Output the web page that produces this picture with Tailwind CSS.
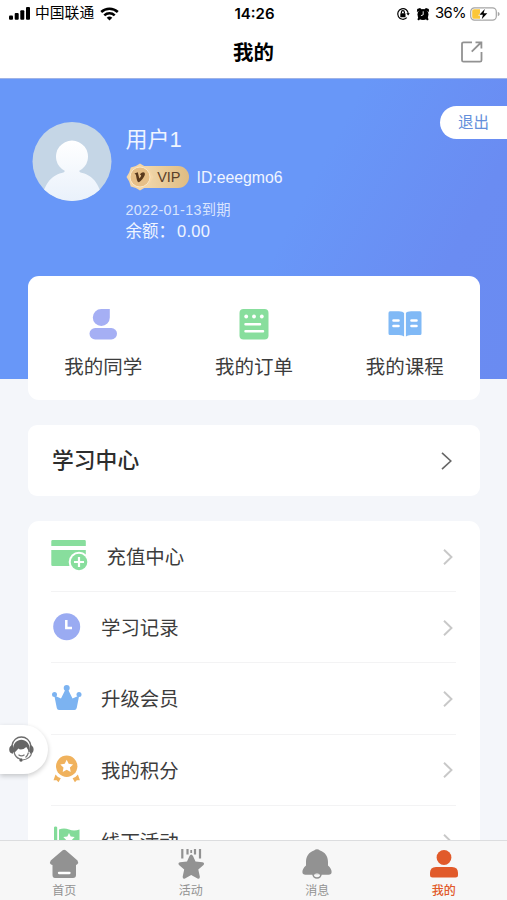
<!DOCTYPE html>
<html lang="zh-CN">
<head>
<meta charset="utf-8">
<meta name="viewport" content="width=device-width, initial-scale=1">
<title>我的</title>
<script src="https://cdn.jsdelivr.net/npm/@tailwindcss/browser@4"></script>
</head>
<body class="bg-[#f4f6fa] font-['Liberation_Sans','Noto_Sans_CJK_SC',sans-serif]">
<div class="relative flex h-[900px] w-[507px] flex-col overflow-hidden bg-[#f4f6fa]">

  <!-- Status bar and title -->
  <header class="h-[79px] shrink-0 border-b border-[#9fb3e6] bg-white text-black">
    <div class="grid h-[27px] grid-cols-[1fr_auto_1fr] items-center pl-[9px] pr-[7px] font-['Inter','Noto_Sans_CJK_SC',sans-serif] text-[14.800px] leading-[27px]">
      <div class="flex items-center">
        <svg class="h-[13px] w-[21px]" viewBox="0 0 21 13"><rect y="8.5" width="4" height="4.3" rx="1"/><rect x="5.7" y="6" width="4" height="6.8" rx="1"/><rect x="11.3" y="3.2" width="4" height="9.6" rx="1"/><rect x="17" y="0" width="4" height="12.8" rx="1"/></svg>
        <span class="ml-[5px]">中国联通</span>
        <svg class="ml-[6px] h-[14px] w-[19px]" viewBox="0 0 19 14" fill="none" stroke="#000" stroke-width="2.5"><path d="M1.2 5a12 12 0 0 1 16.6 0"/><path d="M4.3 8.4a7.5 7.5 0 0 1 10.4 0"/><path d="M9.5 13.6 6.7 10.8a4 4 0 0 1 5.6 0z" fill="#000" stroke="none"/></svg>
      </div>
      <span class="text-[15px] font-semibold">14:26</span>
      <div class="flex items-center justify-end">
        <svg class="h-[14px] w-[14px]" viewBox="0 0 14 14" fill="none" stroke="#000" stroke-width="1.2"><path d="M10.8 10.7A5.3 5.3 0 1 1 12.3 7"/><path d="M10.3 6.2h3.5L12.2 8.6z" fill="#000" stroke="none"/><rect x="4.3" y="6.2" width="5.2" height="4" rx=".5" fill="#000" stroke="none"/><path d="M5.4 6.5V5.2a1.5 1.5 0 0 1 3 0v1.3"/></svg>
        <svg class="ml-[6px] h-[14px] w-[14px]" viewBox="0 0 14 14"><circle cx="7" cy="7.500" r="5.500"/><path d="M.9 4.900 1.200 2 4 .9l2 1.600zM13.100 4.900 12.800 2 10 .9 8 2.500zM2.600 9.500l2 2-1.700 2-1.500-1zM11.400 9.500l-2 2 1.700 2 1.500-1z"/><path d="M7.200 4.300v3.500l-2.300.9" fill="none" stroke="#fff" stroke-width=".9"/></svg>
        <span class="ml-[5px] tracking-[-0.600px]">36%</span>
        <svg class="ml-[4px] h-[14px] w-[30px]" viewBox="0 0 30 14"><rect x=".7" y=".9" width="25.600" height="12.200" rx="3.800" fill="#fff" stroke="#a5a5a5" stroke-width="1.200"/><path d="M27.800 5v4.200c1.300-.4 1.800-1.200 1.800-2.100S29.100 5.400 27.800 5z" fill="#a5a5a5"/><path d="M4.500 2.300H10V11.800H4.500A2 2 0 0 1 2.200 9.600V4.500A2 2 0 0 1 4.500 2.300z" fill="#fbc638"/><path d="M14.800 2 9.400 7.800h3.500L11.700 12.300 17.300 6.300h-3.700z" stroke="#fff" stroke-width="1.200" paint-order="stroke"/></svg>
      </div>
    </div>
    <div class="grid h-[51px] grid-cols-[1fr_auto_1fr] items-center pl-6 pr-[24px]">
      <span></span>
      <h1 class="text-[20.500px] leading-[30px] font-bold">我的</h1>
      <svg class="-mt-[2px] h-[22px] w-[22px] justify-self-end" viewBox="0 0 22 22" fill="none" stroke="#929292" stroke-width="1.800"><path d="M11 1.300H2.500A1.500 1.500 0 0 0 1 2.800V19.200A1.500 1.500 0 0 0 2.500 20.700H19A1.500 1.500 0 0 0 20.500 19.200V11"/><path d="M10.700 10.700 19.500 2M14.500 1.400H20.400V7.400"/></svg>
    </div>
  </header>

  <main class="min-h-0 flex-1 overflow-hidden">
    <!-- Profile -->
    <section class="flex h-[300px] items-start justify-between bg-[linear-gradient(118deg,#6897f8_0%,#6897f8_55%,#6a8cf2_82%,#6a8bf1_100%)] pt-[27px] pl-8">
      <div class="flex pt-4">
        <svg class="h-20 w-20" viewBox="0 0 80 80"><defs><clipPath id="av"><circle cx="40" cy="39.500" r="39.500"/></clipPath><linearGradient id="bust" x1="0" y1="0" x2="0" y2="1"><stop offset="0" stop-color="#fff"/><stop offset="1" stop-color="#e9f1fb"/></linearGradient></defs><g clip-path="url(#av)"><rect width="80" height="80" fill="#c5d6e6"/><path d="M10 80C11 61 21 52.500 31.500 50.500L33 49A16 16 0 1 1 47 49l1.500 1.500C59 52.500 69 61 70 80z" fill="url(#bust)"/></g></svg>
        <div class="pt-[3px] pl-[13.500px] text-white/90">
          <div class="text-[22px] leading-[30px]">用户1</div>
          <div class="mt-[8px] flex h-7 items-center">
            <div class="flex h-7 items-center">
              <svg class="z-10 h-7 w-7" viewBox="0 0 28 28"><path d="M14 .5 18.200 3 23.200 4.500 24.800 9.500 27.500 14 24.800 18.500 23.200 23.500 18.200 25 14 27.500 9.800 25 4.800 23.500 3.200 18.500.5 14 3.200 9.500 4.800 4.500 9.800 3z" fill="#f4d6a7"/><circle cx="14" cy="14" r="10" fill="#e7bf87" stroke="#fbe8c8" stroke-width="1"/><path d="M8.500 10.500 11.800 9.200 13.300 15.600C15.600 13 15.800 11.600 13.900 11.700 14.800 8.800 19.300 8 18.900 11.300 18.500 14.200 15 18.500 12.800 19.200 11.200 19 10.800 16.500 9.900 11.700z" fill="#59391d"/></svg>
              <span class="-ml-4 flex h-[22px] w-[51px] items-center justify-end rounded-r-full bg-[linear-gradient(90deg,#f3dbb1,#dfbc83)] pr-[8px] text-[14.500px] leading-[22px] text-[#59402a]">VIP</span>
            </div>
            <span class="ml-[8px] pt-[2px] text-[15.800px] leading-5">ID:eeegmo6</span>
          </div>
          <div class="mt-[9px] text-[14.300px] leading-[20px] tracking-[0.300px] text-white/75">2022-01-13到期</div>
          <div class="text-[16.500px] leading-[22px]">余额：<span class="ml-[2px] tracking-[0.300px]">0.00</span></div>
        </div>
      </div>
      <button class="h-[33px] w-[67px] rounded-l-full bg-white text-[15.500px] text-[#648fdb]">退出</button>
    </section>

    <!-- Shortcuts -->
    <section class="mx-7 -mt-[103px] grid h-[124px] w-[452px] grid-cols-3 rounded-[11px] bg-white pt-[31px] text-[19.500px] leading-[28px] text-[#3c3c3c]">
      <div class="flex flex-col items-center gap-[12px]">
        <svg class="h-[34px] w-[34px]" viewBox="0 0 34 34" fill="#a5aff4"><path d="M15.300 2H23.800V10.500A8.500 8.500 0 1 1 15.300 2z"/><rect x="3.500" y="21" width="27.500" height="11.500" rx="5.700"/></svg>
        <span>我的同学</span>
      </div>
      <div class="flex flex-col items-center gap-[12px]">
        <svg class="h-[34px] w-[34px]" viewBox="0 0 34 34"><rect x="2.500" y="2" width="29" height="30.500" rx="4" fill="#88de9d"/><g fill="#fff"><circle cx="9.200" cy="9.500" r="1.900"/><circle cx="17" cy="9.500" r="1.900"/><circle cx="24.800" cy="9.500" r="1.900"/></g><path d="M8.500 17.200H23M8.500 24.300H26" stroke="#fff" stroke-width="2.500" stroke-linecap="round"/></svg>
        <span>我的订单</span>
      </div>
      <div class="flex flex-col items-center gap-[12px]">
        <svg class="h-[34px] w-[34px]" viewBox="0 0 34 34"><path d="M.5 6Q.5 4.500 2 4.300H11Q15 4.300 16.100 6V29.500Q14.500 28 11 28H2Q.5 28 .5 26.500zM33.500 6Q33.500 4.500 32 4.300H23Q19 4.300 17.900 6V29.500Q19.500 28 23 28H32Q33.500 28 33.500 26.500z" fill="#80b9f6"/><path d="M5.500 13.500h5M5.500 19h5M23.500 13.500h5M23.500 19h5" stroke="#fff" stroke-width="2.600" stroke-linecap="round"/></svg>
        <span>我的课程</span>
      </div>
    </section>

    <!-- Learning centre -->
    <section class="mx-7 mt-[25px] flex h-[71px] w-[452px] items-center justify-between rounded-[9px] bg-white pl-6 pr-7">
      <h2 class="text-[21.800px] leading-8 font-medium text-[#2d2d2d]">学习中心</h2>
      <svg class="h-[18px] w-[11px]" viewBox="0 0 11 18" fill="none" stroke="#666" stroke-width="1.600"><path d="M1 .8 9.800 9 1 17.200"/></svg>
    </section>

    <!-- Menu -->
    <ul class="mx-7 mt-[25px] w-[452px] rounded-[11px] bg-white pl-[23px] pr-6 text-[19.400px] leading-7 text-[#3c3c3c]">
      <li class="flex h-[71.200px] items-center border-b border-[#f3f3f4]">
        <svg class="h-[34px] w-[38px]" viewBox="0 0 38 34"><path d="M.3 2.300Q.3 1 1.600 1H33.500Q34.800 1 34.800 2.300V7H.3zM.3 11H34.800V27H1.600Q.3 27 .3 25.700z" fill="#88de9d"/><circle cx="28" cy="23" r="10.300" fill="#fff"/><circle cx="28" cy="23" r="8.300" fill="#88de9d"/><path d="M28 18v10M23 23h10" stroke="#fff" stroke-width="2.200"/></svg>
        <span class="ml-[17.500px] pt-[2px]">充值中心</span>
        <svg class="mt-px ml-auto mr-[3px] h-4 w-[10px]" viewBox="0 0 10 16" fill="none" stroke="#c8c8c8" stroke-width="1.900"><path d="M1 .8 8.500 8 1 15.200"/></svg>
      </li>
      <li class="flex h-[71.200px] items-center border-b border-[#f3f3f4]">
        <svg class="h-8 w-8" viewBox="0 0 32 32"><circle cx="15.700" cy="15.800" r="13.500" fill="#9aabf2"/><path d="M15.300 9V17H21" fill="none" stroke="#fff" stroke-width="2.500"/></svg>
        <span class="ml-[18px] pt-[2px]">学习记录</span>
        <svg class="mt-px ml-auto mr-[3px] h-4 w-[10px]" viewBox="0 0 10 16" fill="none" stroke="#c8c8c8" stroke-width="1.900"><path d="M1 .8 8.500 8 1 15.200"/></svg>
      </li>
      <li class="flex h-[71.200px] items-center border-b border-[#f3f3f4]">
        <svg class="mt-[2px] h-8 w-8" viewBox="0 0 32 32" fill="#7cb3f1"><circle cx="15.700" cy="5" r="3"/><circle cx="3.500" cy="11.500" r="2.500"/><circle cx="28" cy="11.500" r="2.500"/><path d="M3.300 12.500 10 15.500 14.200 7H17.300L21.500 15.500 28.200 12.500 25.700 25Q25.200 27 23.500 27H8Q6.200 27 5.800 25z"/></svg>
        <span class="ml-[18px] pt-[2px]">升级会员</span>
        <svg class="mt-[2px] ml-auto mr-[3px] h-4 w-[10px]" viewBox="0 0 10 16" fill="none" stroke="#c8c8c8" stroke-width="1.900"><path d="M1 .8 8.500 8 1 15.200"/></svg>
      </li>
      <li class="flex h-[71.200px] items-center border-b border-[#f3f3f4]">
        <svg class="h-8 w-8" viewBox="0 0 32 32"><circle cx="15.700" cy="12.300" r="10.700" fill="#f0b25d"/><path d="m15.700 5.800 2 4 4.400.6-3.200 3.100.8 4.400-4-2.100-4 2.100.8-4.400-3.200-3.100 4.400-.6z" fill="#fff"/><path d="M4.500 20.500Q6.500 23.300 9.800 24.300L7.500 28.300 5.600 26.200 2.500 26.300zM26.900 20.500Q24.900 23.300 21.600 24.300L23.900 28.300 25.800 26.200 28.900 26.300z" fill="#f0b25d"/></svg>
        <span class="ml-[18px] pt-[2px]">我的积分</span>
        <svg class="mt-px ml-auto mr-[3px] h-4 w-[10px]" viewBox="0 0 10 16" fill="none" stroke="#c8c8c8" stroke-width="1.900"><path d="M1 .8 8.500 8 1 15.200"/></svg>
      </li>
      <li class="flex h-[71.200px] items-center">
        <svg class="h-8 w-8" viewBox="0 0 32 32"><path d="M3 2.500Q3 1.500 4.600 1.500T6.200 2.500V31H3zM8 4.500Q13 2.300 18 4.500T28.500 4.500V23Q23 25.500 18 23T8 23z" fill="#83db99"/><path d="m18 8 1.700 3.600 4 .5-2.900 2.800.7 4-3.500-2-3.500 2 .7-4-2.900-2.800 4-.5z" fill="#fff"/></svg>
        <span class="ml-[18px] pt-[2px]">线下活动</span>
        <svg class="mt-px ml-auto mr-[3px] h-4 w-[10px]" viewBox="0 0 10 16" fill="none" stroke="#c8c8c8" stroke-width="1.900"><path d="M1 .8 8.500 8 1 15.200"/></svg>
      </li>
    </ul>
  </main>

  <!-- Tab bar -->
  <nav class="grid h-[60px] shrink-0 grid-cols-4 border-t border-[#dcdddf] bg-[#f7f7f7] pt-[8px] pl-px text-[12px] leading-[16px] text-[#929292]">
    <div class="flex flex-col items-center gap-[4px]">
      <svg class="h-[30px] w-[30px]" viewBox="0 0 30 30"><path d="M13.700 1.300Q15.200 0 16.700 1.300L28.500 11.500Q30 13.500 28 15.500L27 16V26Q27 29 24 29H6Q3.500 29 3.500 26V16L2 15.500Q.2 13.500 1.700 11.500z" fill="#929292"/><path d="M10 24H20.500" stroke="#fff" stroke-width="2.300" stroke-linecap="round"/></svg>
      <span>首页</span>
    </div>
    <div class="flex flex-col items-center gap-[4px]">
      <svg class="h-[30px] w-[30px]" viewBox="0 0 30 30" fill="#929292"><path d="M15.200 5.500Q16.200 5.500 17 7L19.500 12.500 26.500 13.300Q29 14 27.500 16L22.300 20.500 23.800 27.500Q24 30.500 21.500 29.500L15.200 26 9 29.500Q6.500 30.500 6.700 27.500L8.200 20.500 3 16Q1.500 14 4 13.300L11 12.500 13.500 7Q14.200 5.500 15.200 5.500z"/><path d="M6.300 0V9.500M11.500 0V5.500M19 0V5.500M24 0V9.500" stroke="#929292" stroke-width="2.200"/><path d="M15.200 1V4" stroke="#929292" stroke-width="1.800"/></svg>
      <span>活动</span>
    </div>
    <div class="flex flex-col items-center gap-[4px]">
      <svg class="h-[30px] w-[30px]" viewBox="0 0 30 30"><circle cx="15" cy="25" r="4" fill="#f7f7f7" stroke="#929292" stroke-width="1.600"/><path d="M12 1.500Q15-1 18 1.500C23 3 26 7.500 26 13V16.500Q29.600 19.500 29.600 23Q29.600 25.800 26.500 25.800H3.500Q.4 25.800 .4 23Q.4 19.500 4 16.500V13C4 7.500 7 3 12 1.500z" fill="#929292"/><path d="M12 25.800Q15 23 18 25.800z" fill="#f7f7f7"/></svg>
      <span>消息</span>
    </div>
    <div class="flex flex-col items-center gap-[4px] text-[#e15a2a]">
      <svg class="h-[30px] w-[30px]" viewBox="0 0 30 30" fill="#e15a2a"><circle cx="15" cy="8.500" r="7.400"/><path d="M7 18H23Q29 18 29 24V26Q29 28.500 26.500 28.500H3.500Q1 28.500 1 26V24Q1 18 7 18z"/></svg>
      <span class="font-medium">我的</span>
    </div>
  </nav>

  <!-- Floating customer service button -->
  <button class="absolute top-[725px] left-0 flex h-[49px] w-[48px] items-center rounded-r-full bg-white pl-[8px] shadow-[0_2px_5px_rgba(0,0,0,0.2)]" aria-label="客服">
    <svg class="h-[27px] w-[27px]" viewBox="0 0 27 27"><path d="M3.800 10C5.500-2 21.300-2 23 10" fill="none" stroke="#6b6b6b" stroke-width="1.300"/><path d="M5 16C3.300-.3 23.500-.3 21.800 16H20.300C20.500 14 19.500 12.800 18.300 11 15.500 13.700 12 14.300 10.200 12.500 9.300 14.300 7.500 15 6.500 17z" fill="#666"/><path d="M5 9V17.800Q1.200 17.200 1.200 13.500T5 9zM21.800 9V17.800Q25.600 17.200 25.600 13.500T21.800 9z" fill="#666"/><path d="M6 16Q7.200 21.500 12 23M23.800 16.500Q22.500 23 14.500 24M10.500 18.700Q13.500 21 16.500 18.700M20.500 16.500Q19.500 20 17.500 21.500" fill="none" stroke="#777" stroke-width="1.200"/><circle cx="13" cy="24" r="1.700" fill="#5f5f5f"/></svg>
  </button>
</div>
</body>
</html>
